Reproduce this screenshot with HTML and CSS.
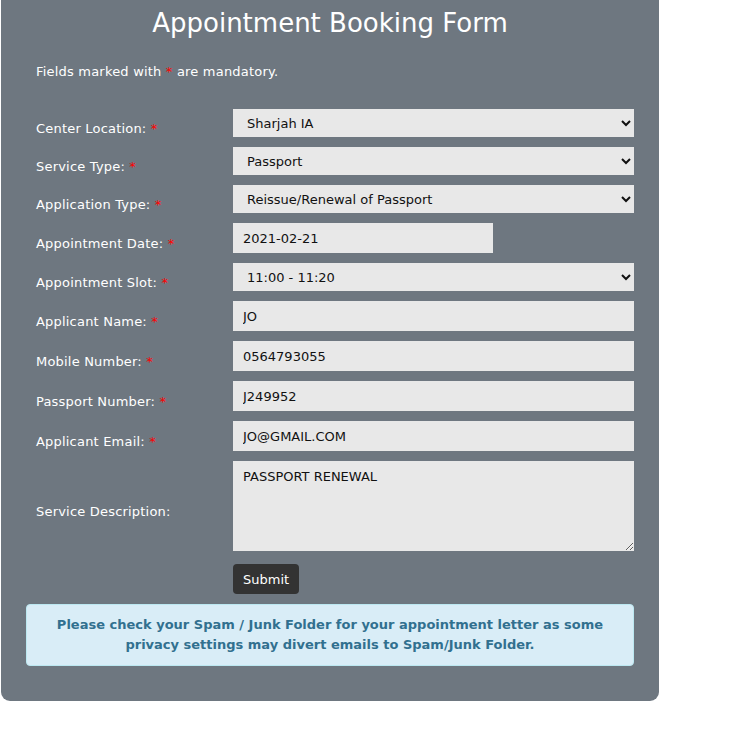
FILE: index.html
```html
<!DOCTYPE html>
<html>
<head>
<meta charset="utf-8">
<link rel="stylesheet" href="styles.css">
</head>
<body>
<div class="panel">
  <h1 class="title">Appointment Booking Form</h1>
  <p class="note">Fields marked with <span class="req">*</span> are mandatory.</p>
  <form class="form">
    <div class="row">
      <label class="lbl">Center Location: <span class="req">*</span></label>
      <select class="field sel"><option>Sharjah IA</option></select>
    </div>
    <div class="row">
      <label class="lbl">Service Type: <span class="req">*</span></label>
      <select class="field sel"><option>Passport</option></select>
    </div>
    <div class="row">
      <label class="lbl">Application Type: <span class="req">*</span></label>
      <select class="field sel"><option>Reissue/Renewal of Passport</option></select>
    </div>
    <div class="row">
      <label class="lbl">Appointment Date: <span class="req">*</span></label>
      <input class="field txt date" type="text" value="2021-02-21">
    </div>
    <div class="row">
      <label class="lbl">Appointment Slot: <span class="req">*</span></label>
      <select class="field sel"><option>11:00 - 11:20</option></select>
    </div>
    <div class="row">
      <label class="lbl">Applicant Name: <span class="req">*</span></label>
      <input class="field txt" type="text" value="JO">
    </div>
    <div class="row">
      <label class="lbl">Mobile Number: <span class="req">*</span></label>
      <input class="field txt" type="text" value="0564793055">
    </div>
    <div class="row">
      <label class="lbl">Passport Number: <span class="req">*</span></label>
      <input class="field txt" type="text" value="J249952">
    </div>
    <div class="row">
      <label class="lbl">Applicant Email: <span class="req">*</span></label>
      <input class="field txt" type="text" value="JO@GMAIL.COM">
    </div>
    <div class="row">
      <label class="lbl">Service Description:</label>
      <textarea class="field area">PASSPORT RENEWAL</textarea>
    </div>
    <div class="row">
      <span class="lbl"></span>
      <button class="btn" type="button">Submit</button>
    </div>
  </form>
  <div class="alert">Please check your Spam / Junk Folder for your appointment letter as some privacy settings may divert emails to Spam/Junk Folder.</div>
</div>
</body>
</html>
```
FILE: styles.css
```css
html, body {
  margin: 0;
  padding: 0;
  background: #ffffff;
}
body {
  font-family: "DejaVu Sans", Verdana, sans-serif;
  font-size: 13px;
  color: #ffffff;
}
.panel {
  width: 658px;
  margin-left: 1px;
  background: #6e7780;
  border-radius: 0 0 9px 9px;
  padding: 0 25px 35px 25px;
  box-sizing: border-box;
}
.title {
  margin: 0;
  padding-top: 6px;
  font-size: 26px;
  font-weight: normal;
  text-align: center;
  line-height: 34px;
}
.note {
  margin: 0;
  padding: 24px 0 0 10px;
  line-height: 16px;
  letter-spacing: 0.2px;
}
.req {
  color: #ff0000;
}
.form {
  display: flex;
  flex-direction: column;
  gap: 10px;
  margin-top: 29px;
}
.row {
  display: flex;
  align-items: center;
}
.lbl {
  flex: none;
  padding: 11px 0 0 10px;
  box-sizing: border-box;
  width: 207px;
  line-height: 16px;
  letter-spacing: 0.2px;
}
.field {
  border: none;
  background: #e8e8e8;
  color: #111111;
  font-family: "DejaVu Sans", Verdana, sans-serif;
  font-size: 13px;
  margin: 0;
  outline: none;
  box-sizing: border-box;
  border-radius: 0;
}
.sel {
  width: 401px;
  height: 28px;
  padding: 0 6px 0 10px;
}
.txt {
  width: 401px;
  height: 30px;
  padding: 0 10px;
}
.date {
  width: 260px;
}
.area {
  width: 401px;
  height: 90px;
  padding: 8px 10px;
  resize: vertical;
  line-height: 16px;
}
.btn {
  background: #333333;
  color: #ffffff;
  border: none;
  border-radius: 4px;
  height: 30px;
  padding: 0 10px;
  font-family: "DejaVu Sans", Verdana, sans-serif;
  font-size: 13px;
  margin-top: 3px;
}
.alert {
  margin-top: 10px;
  background: #d9edf7;
  border: 1px solid #bce8f1;
  border-radius: 4px;
  color: #31708f;
  font-weight: bold;
  text-align: center;
  padding: 10px 20px;
  line-height: 20px;
}
```
